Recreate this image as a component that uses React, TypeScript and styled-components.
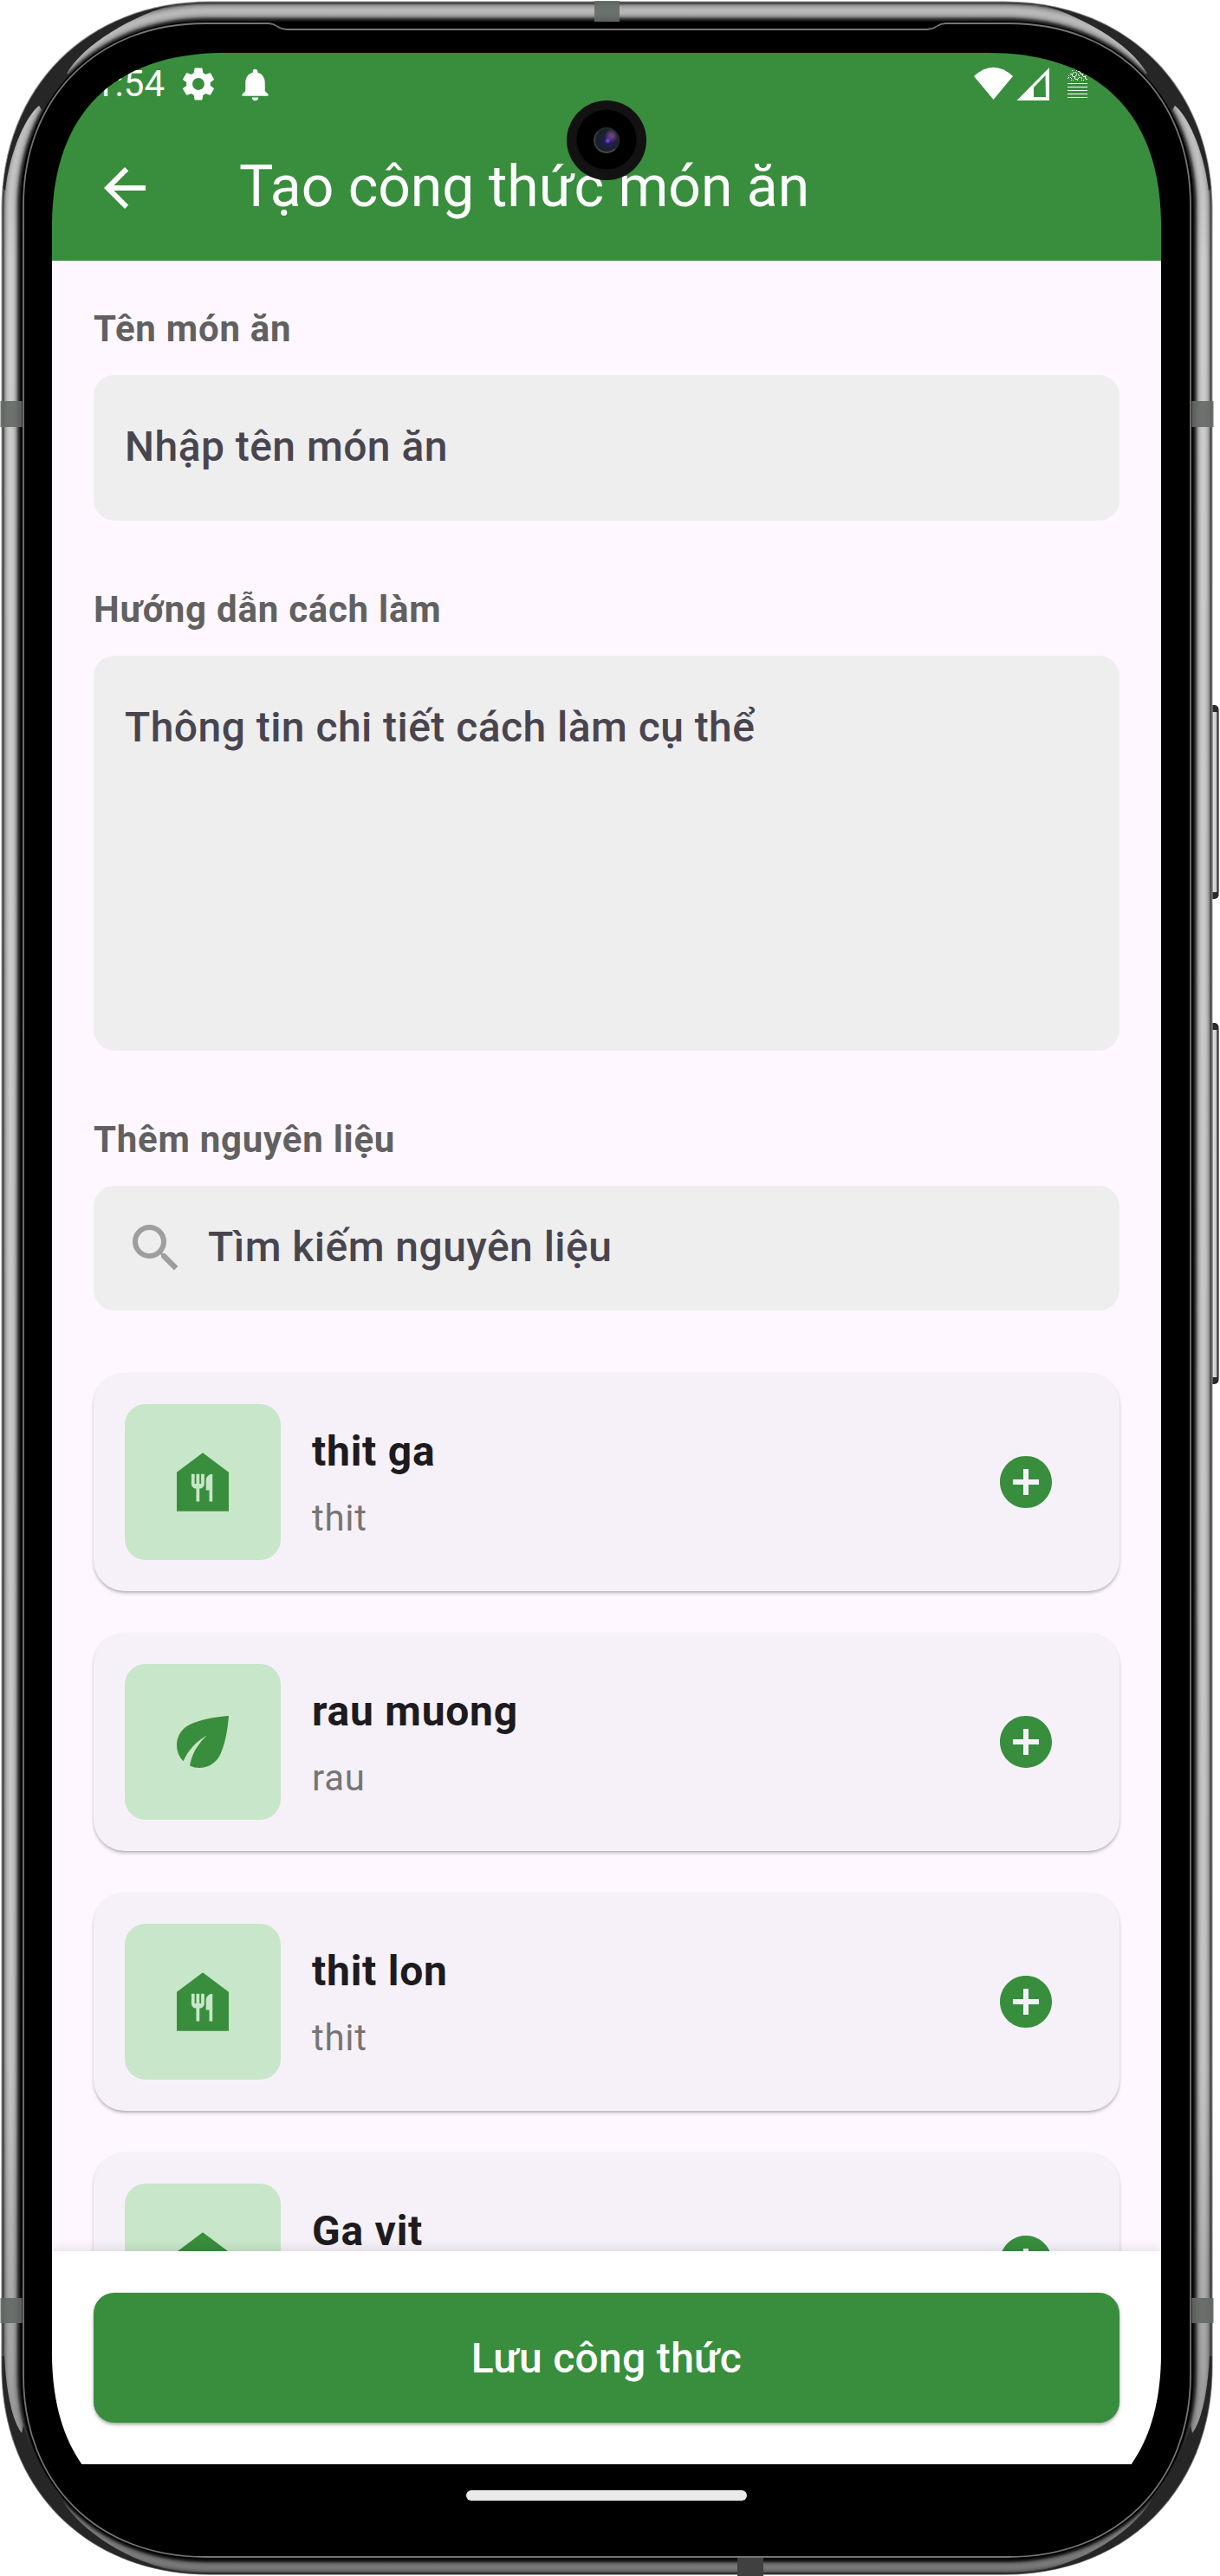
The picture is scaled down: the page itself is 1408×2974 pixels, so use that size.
import React from "react";
import styled, { createGlobalStyle } from "styled-components";

const GREEN = "#388e3c";

const GlobalStyle = createGlobalStyle`
  * { box-sizing: border-box; }
  body { margin: 0; background: #fff; }
`;

/* ---------- device frame ---------- */

const squircle = (x0: number, y0: number, x1: number, y1: number, l: number, c: number) =>
  `M${x0} ${y0 + l}C${x0} ${y0 + c} ${x0 + c} ${y0} ${x0 + l} ${y0}H${x1 - l}` +
  `C${x1 - c} ${y0} ${x1} ${y0 + c} ${x1} ${y0 + l}V${y1 - l}` +
  `C${x1} ${y1 - c} ${x1 - c} ${y1} ${x1 - l} ${y1}H${x0 + l}` +
  `C${x0 + c} ${y1} ${x0} ${y1 - c} ${x0} ${y1 - l}Z`;

const SCREEN_CLIP = squircle(0, 0, 1280, 2856, 200, 70.7);

const BAND_TONES = [
  "#9a9a9a", "#3c3c3c", "#5a5a5a", "#868686", "#a2a2a2", "#b0b0b0", "#bcbcbc", "#c4c4c4", "#cacaca",
  "#cccccc", "#cccccc", "#cacaca", "#c4c4c4", "#bcbcbc", "#b0b0b0", "#9c9c9c", "#7c7c7c", "#565656",
  "#3a3a3a", "#262626", "#101010",
];

const Phone = styled.div`
  position: relative;
  width: 1408px;
  height: 2974px;
  padding: 61px 68px 57px 60px;
  overflow: hidden;
  font-family: Roboto, "Noto Sans", sans-serif;
`;

const FrameArt = styled.svg`
  position: absolute;
  inset: 0;
`;

const Frame = () => (
  <FrameArt width="1408" height="2974" viewBox="0 0 1408 2974">
    <defs>
      <linearGradient id="shade" x1="0" y1="0" x2="0" y2="1">
        <stop offset="0" stopColor="#000" stopOpacity="0.1" />
        <stop offset="0.06" stopColor="#000" stopOpacity="0.06" />
        <stop offset="0.1" stopColor="#000" stopOpacity="0" />
        <stop offset="0.8" stopColor="#000" stopOpacity="0.04" />
        <stop offset="0.92" stopColor="#000" stopOpacity="0.2" />
        <stop offset="0.97" stopColor="#000" stopOpacity="0.36" />
        <stop offset="1" stopColor="#000" stopOpacity="0.42" />
      </linearGradient>
      <linearGradient id="key" x1="0" y1="0" x2="1" y2="0">
        <stop offset="0" stopColor="#777" />
        <stop offset="0.2" stopColor="#dcdcdc" />
        <stop offset="0.65" stopColor="#c8c8c8" />
        <stop offset="0.8" stopColor="#222" />
        <stop offset="1" stopColor="#666" />
      </linearGradient>
      <clipPath id="body">
        <path d={squircle(2.5, 2.5, 1398.5, 2971.5, 240, 98.7)} />
      </clipPath>
    </defs>
    {[[814, 224], [1181, 417]].map(([y, h]) => (
      <g key={y}>
        <rect x="1392" y={y} width="14.5" height={h} rx="5" fill="#2a2a2a" />
        <rect x="1399" y={y + 8} width="7.500" height={h - 16} fill="url(#key)" />
      </g>
    ))}
    {BAND_TONES.map((tone, i) => (
      <path
        key={i}
        d={squircle(1.5 + i * 1.08, 1.5 + i * 1.12, 1399.5 - i * 1.08, 2972.5 - i * 0.85, 240 - i * 1.2, 98.7 - i * 0.5)}
        fill={tone}
      />
    ))}
    <path d={squircle(1.5, 1.5, 1399.5, 2972.5, 240, 98.7)} fill="url(#shade)" />
    <g clipPath="url(#body)" fill="#262626">
      {["", "translate(1401 0) scale(-1 1)"].map((t) => (
        <g key={t} transform={t}>
          <path d="M210 2C150 18 96 52 77 85L83 87Q60 108 49 128L45 122C32 132 12 170 6 220L0 215V0Z" />
          <path d="M210 2970C148 2958 96 2924 72 2887L80 2890Q42 2852 27 2800L25 2809C14 2795 7 2760 5 2720L0 2720V2974Z" />
        </g>
      ))}
    </g>
    <path d={squircle(24, 25, 1377, 2954, 214, 85.7)} fill="#000" />
    <path
      d="M27 237C27 112 112 27 237 27H310C320 27 320 34 331 34H1070C1081 34 1081 27 1091 27H1164C1289 27 1374 112 1374 237V2742C1374 2867 1289 2952 1164 2952H237C112 2952 27 2867 27 2742Z"
      fill="none"
      stroke="#757575"
      strokeWidth="1.8"
    />
    <g fill="#666a66" fillOpacity="0.92">
      <rect x="0.5" y="463" width="25" height="30" />
      <rect x="1375.5" y="463" width="25" height="30" />
      <rect x="0.5" y="2653" width="25" height="29" />
      <rect x="1375.5" y="2653" width="25" height="29" />
      <rect x="686" y="1" width="29" height="24" />
    </g>
    <rect x="851" y="2953" width="30" height="21" fill="#404040" />
  </FrameArt>
);

const Camera = styled.div`
  position: absolute;
  left: 654px;
  top: 116px;
  width: 92px;
  height: 92px;
  border-radius: 50%;
  background: radial-gradient(circle at 50% 49%, #000 0 34px, #121212 35px);
  display: flex;
  align-items: center;
  justify-content: center;
`;

const Lens = styled.div`
  width: 30px;
  height: 30px;
  border-radius: 50%;
  border: 2px solid #2a2828;
  border-left-color: #3c3c3c;
  border-bottom-color: #4c4948;
  background:
    radial-gradient(circle at 55% 52%, #6a45e8 0 1px, transparent 3.5px),
    radial-gradient(circle at 72% 30%, #6d3f7c 0 2px, transparent 8px),
    radial-gradient(circle at 60% 55%, #2c1668 0, transparent 11px),
    #16232c;
`;

/* ---------- screen ---------- */

const Screen = styled.div`
  position: relative;
  width: 1280px;
  height: 2856px;
  display: flex;
  flex-direction: column;
  clip-path: path("${SCREEN_CLIP}");
`;

const Header = styled.header`
  height: 240px;
  flex: none;
  background: ${GREEN};
  color: #fff;
`;

const StatusBar = styled.div`
  height: 72px;
  padding: 0 84px 0 49px;
  display: flex;
  align-items: center;
  justify-content: space-between;
`;

const StatusGroup = styled.div`
  display: flex;
  align-items: center;
`;

const Clock = styled.span`
  font-size: 42px;
  line-height: 50px;
  margin-right: 20px;
`;

const AppBar = styled.div`
  height: 168px;
  padding-left: 48px;
  display: flex;
  align-items: center;
  gap: 96px;
`;

const Title = styled.h1`
  margin: 0 0 3px;
  font-size: 66px;
  line-height: 84px;
  font-weight: 400;
`;

const Content = styled.main`
  flex: 1;
  min-height: 0;
  overflow: hidden;
  padding: 48px 48px 0;
  background: #fef7ff;
  display: flex;
  flex-direction: column;
  gap: 72px;
`;

const Section = styled.section`
  flex: none;
  display: flex;
  flex-direction: column;
  gap: 24px;
`;

const Label = styled.h2`
  margin: 0;
  height: 60px;
  padding-top: 1px;
  font-size: 42px;
  line-height: 60px;
  font-weight: 700;
  letter-spacing: 0.75px;
  color: #616161;
`;

const Field = styled.div<{ $height: number }>`
  height: ${(p) => p.$height}px;
  padding: 47px 36px;
  border-radius: 24px;
  background: #eeeeee;
`;

const SearchField = styled.div`
  height: 144px;
  padding: 0 36px;
  border-radius: 24px;
  background: #eeeeee;
  display: flex;
  align-items: center;
  gap: 24px;
  color: #9e9e9e;
`;

const Placeholder = styled.div`
  font-size: 48px;
  line-height: 72px;
  font-weight: 500;
  letter-spacing: 0.45px;
  color: #49454f;
`;

const SearchHint = styled(Placeholder)`
  margin-bottom: 2px;
`;

const List = styled.div`
  flex: none;
  display: flex;
  flex-direction: column;
  gap: 48px;
`;

const Card = styled.article`
  height: 252px;
  padding: 36px;
  border-radius: 36px;
  background: #f6f1f9;
  box-shadow: 0 3px 4px -1px rgba(0, 0, 0, 0.26), 0 1px 3px rgba(0, 0, 0, 0.1);
  display: flex;
  align-items: center;
  gap: 36px;
`;

const Tile = styled.div`
  width: 180px;
  height: 180px;
  border-radius: 24px;
  background: #c8e6c9;
  color: ${GREEN};
  display: flex;
  align-items: center;
  justify-content: center;
`;

const CardText = styled.div`
  flex: 1;
  display: flex;
  flex-direction: column;
  gap: 11px;
`;

const Name = styled.div`
  padding-top: 1px;
  font-size: 48px;
  line-height: 72px;
  font-weight: 700;
  letter-spacing: 0.75px;
  color: #1d1b20;
`;

const Kind = styled.div`
  font-size: 42px;
  line-height: 60px;
  letter-spacing: 0.75px;
  color: #757575;
`;

const AddButton = styled.div`
  width: 144px;
  height: 144px;
  display: flex;
  align-items: center;
  justify-content: center;
  color: ${GREEN};
`;

const BottomBar = styled.footer`
  position: relative;
  flex: none;
  height: 246px;
  padding: 48px;
  background: #fff;
  box-shadow: 0 -3px 12px rgba(0, 0, 0, 0.1);
`;

const SaveButton = styled.div`
  height: 150px;
  border-radius: 24px;
  background: ${GREEN};
  color: #fff;
  display: flex;
  align-items: center;
  justify-content: center;
  font-size: 48px;
  font-weight: 500;
  letter-spacing: 0.3px;
  box-shadow: 0 3px 4px -1px rgba(0, 0, 0, 0.3), 0 1px 4px rgba(0, 0, 0, 0.14);
`;

const NavBar = styled.nav`
  height: 72px;
  flex: none;
  background: #000;
  display: flex;
  align-items: center;
  justify-content: center;
`;

const Handle = styled.div`
  width: 324px;
  height: 12px;
  border-radius: 6px;
  background: #eaeaea;
`;

const Spaced = styled.svg<{ $left?: number }>`
  display: block;
  flex: none;
  margin-left: ${(p) => p.$left ?? 0}px;
`;

const Icon = ({ d, size = 72, left }: { d: string; size?: number; left?: number }) => (
  <Spaced $left={left} width={size} height={size} viewBox="0 0 24 24" fill="currentColor">
    <path d={d} fillRule="evenodd" />
  </Spaced>
);

const ICONS = {
  back: "M20 11H7.83l5.59-5.59L12 4l-8 8 8 8 1.41-1.41L7.83 13H20v-2z",
  search:
    "M15.5 14h-.79l-.28-.27A6.471 6.471 0 0 0 16 9.5 6.5 6.5 0 1 0 9.5 16c1.61 0 3.09-.59 4.23-1.57l.27.28v.79l5 4.99L20.49 19l-4.99-5zm-6 0C7.01 14 5 11.99 5 9.5S7.01 5 9.5 5 14 7.01 14 9.5 11.99 14 9.5 14z",
  meat:
    "M12 3L4 9v12h16V9L12 3zM12.5 12.5c0 .83-.67 1.5-1.5 1.5v4h-1v-4c-.83 0-1.5-.67-1.5-1.5v-3h1v3h.5v-3h1v3h.5v-3h1v3zM15 18h-1v-3.5h-1v-3c0-1.1.9-2 2-2V18z",
  leaf:
    "M6.05 8.05c-2.73 2.73-2.73 7.15-.02 9.88 1.47-3.4 4.09-6.24 7.36-7.93-2.77 2.34-4.71 5.61-5.39 9.32 2.6 1.23 5.8.78 7.95-1.37C19.43 14.47 20 4 20 4S9.53 4.57 6.05 8.05z",
  add: "M12 2C6.48 2 2 6.48 2 12s4.48 10 10 10 10-4.48 10-10S17.52 2 12 2zm5 11h-4v4h-2v-4H7v-2h4V7h2v4h4v2z",
  gear:
    "M19.14 12.94c.04-.3.06-.61.06-.94 0-.32-.02-.64-.07-.94l2.03-1.58c.18-.14.23-.41.12-.61l-1.92-3.32c-.12-.22-.37-.29-.59-.22l-2.39.96c-.5-.38-1.03-.7-1.62-.94l-.36-2.54c-.04-.24-.24-.41-.48-.41h-3.84c-.24 0-.43.17-.47.41l-.36 2.54c-.59.24-1.13.57-1.62.94l-2.39-.96c-.22-.08-.47 0-.59.22L2.74 8.87c-.12.21-.08.47.12.61l2.03 1.58c-.05.3-.09.63-.09.94s.02.64.07.94l-2.03 1.58c-.18.14-.23.41-.12.61l1.92 3.32c.12.22.37.29.59.22l2.39-.96c.5.38 1.03.7 1.62.94l.36 2.54c.05.24.24.41.48.41h3.84c.24 0 .44-.17.47-.41l.36-2.54c.59-.24 1.13-.56 1.62-.94l2.39.96c.22.08.47 0 .59-.22l1.92-3.32c.12-.22.07-.47-.12-.61l-2.01-1.58zM12 15.6c-1.98 0-3.6-1.62-3.6-3.6s1.62-3.6 3.6-3.6 3.6 1.62 3.6 3.6-1.62 3.6-3.6 3.6z",
  bell:
    "M12 22c1.1 0 2-.9 2-2h-4c0 1.1.89 2 2 2zm6-6v-5c0-3.07-1.64-5.64-4.5-6.32V4c0-.83-.67-1.5-1.5-1.5s-1.5.67-1.5 1.5v.68C7.63 5.36 6 7.92 6 11v5l-2 2v1h16v-1l-2-2z",
};

const SignalIcons = () => (
  <svg width="132" height="40" viewBox="0 0 132 40" fill="#fff">
    <path d="M0 11Q22.500 -9.500 45 11L22.500 38Z" />
    <path d="M87 1V39H49.500ZM82.500 10L69 24V35H83Z" fillRule="evenodd" />
    {[19, 23, 27, 31, 35].map((y) => (
      <rect key={y} x="108" y={y} width="23" height="1" />
    ))}
    {Array.from({ length: 15 }, (_, row) =>
      Array.from({ length: 23 }, (_, col) =>
        (col * 7 + row * 5 + ((col * row) % 3)) % (row < 4 ? 5 : 4) < 1 && col > 5 - row / 2 ? (
          <rect key={`${row}-${col}`} x={108 + col} y={1 + row} width="1" height="1" />
        ) : null
      )
    )}
  </svg>
);

const INGREDIENTS: { name: string; kind: string; icon: "meat" | "leaf" }[] = [
  { name: "thit ga", kind: "thit", icon: "meat" },
  { name: "rau muong", kind: "rau", icon: "leaf" },
  { name: "thit lon", kind: "thit", icon: "meat" },
  { name: "Ga vit", kind: "thit", icon: "meat" },
];

export default function App() {
  return (
    <Phone>
      <GlobalStyle />
      <Frame />
      <Screen>
        <Header>
          <StatusBar>
            <StatusGroup>
              <Clock>1:54</Clock>
              <Icon d={ICONS.gear} size={46} left={-4} />
              <Icon d={ICONS.bell} size={45} left={20} />
            </StatusGroup>
            <SignalIcons />
          </StatusBar>
          <AppBar>
            <Icon d={ICONS.back} />
            <Title>Tạo công thức món ăn</Title>
          </AppBar>
        </Header>
        <Content>
          <Section>
            <Label>Tên món ăn</Label>
            <Field $height={168}>
              <Placeholder>Nhập tên món ăn</Placeholder>
            </Field>
          </Section>
          <Section>
            <Label>Hướng dẫn cách làm</Label>
            <Field $height={456}>
              <Placeholder>Thông tin chi tiết cách làm cụ thể</Placeholder>
            </Field>
          </Section>
          <Section>
            <Label>Thêm nguyên liệu</Label>
            <SearchField>
              <Icon d={ICONS.search} />
              <SearchHint>Tìm kiếm nguyên liệu</SearchHint>
            </SearchField>
          </Section>
          <List>
            {INGREDIENTS.map((item) => (
              <Card key={item.name}>
                <Tile>
                  <Icon d={ICONS[item.icon]} size={90} />
                </Tile>
                <CardText>
                  <Name>{item.name}</Name>
                  <Kind>{item.kind}</Kind>
                </CardText>
                <AddButton>
                  <Icon d={ICONS.add} />
                </AddButton>
              </Card>
            ))}
          </List>
        </Content>
        <BottomBar>
          <SaveButton>Lưu công thức</SaveButton>
        </BottomBar>
        <NavBar>
          <Handle />
        </NavBar>
      </Screen>
      <Camera>
        <Lens />
      </Camera>
    </Phone>
  );
}
